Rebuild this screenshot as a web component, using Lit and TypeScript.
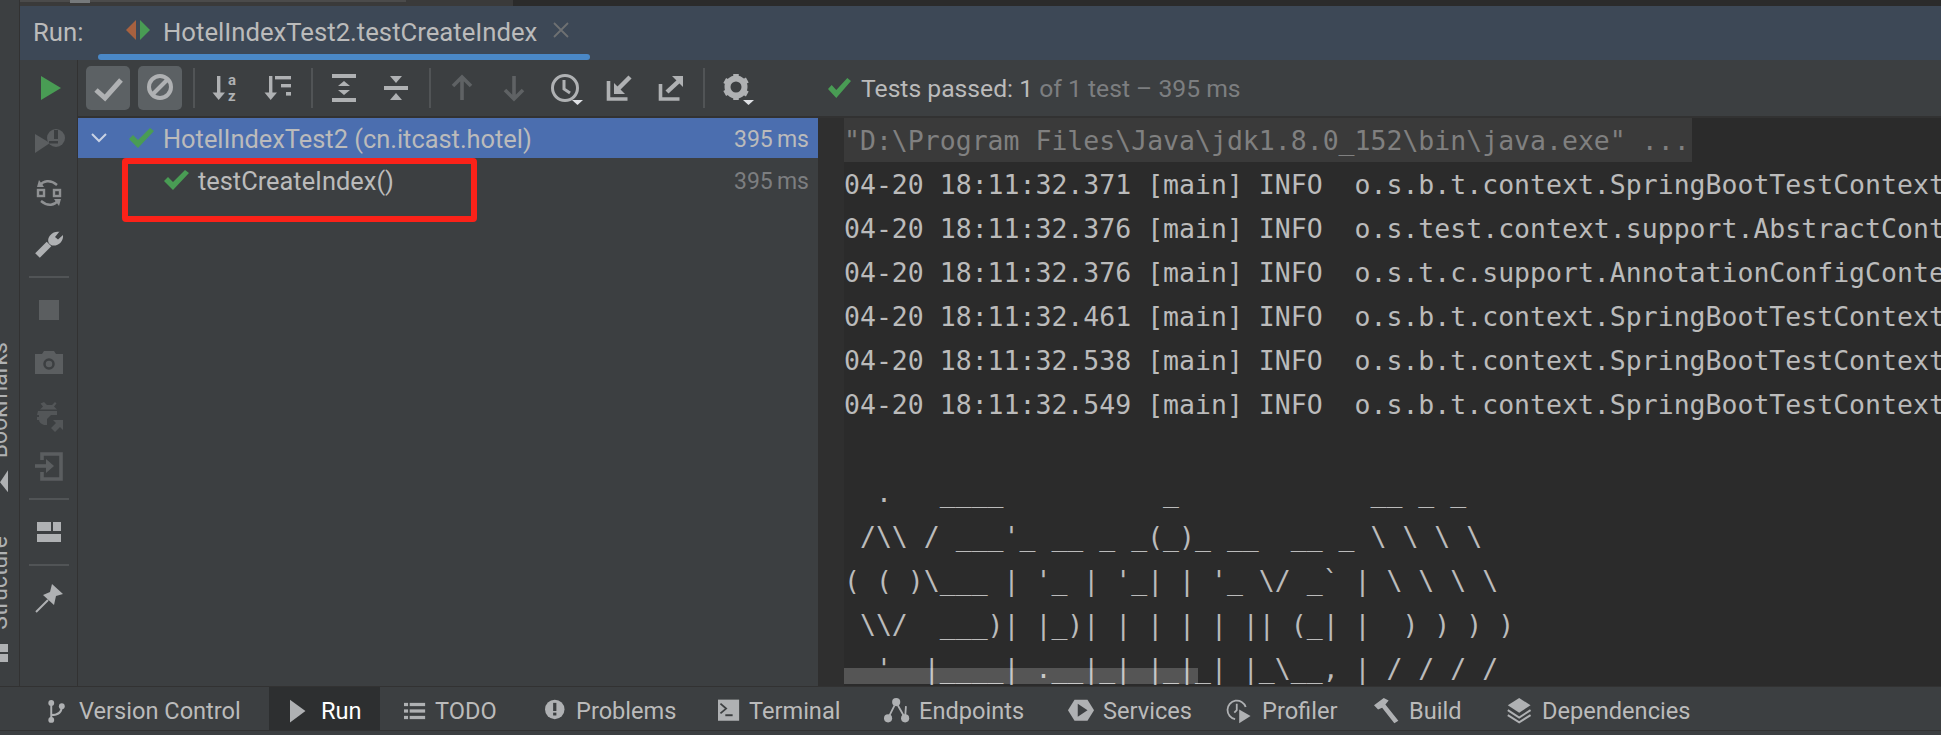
import { LitElement, html, css, svg } from "lit";
import { customElement } from "lit/decorators.js";

const ic = (body: unknown, size = 32) =>
  html`<svg class="ic" width=${size} height=${size} viewBox="0 0 32 32">${body}</svg>`;

const caret = svg`<polygon points="22,28 33,28 27.5,33" fill="#dfe1e5"/>`;

const tool = {
  az: svg`<g fill="#afb1b3"><rect x="8" y="4" width="3.4" height="20"/><polygon points="3.5,20.5 16,20.5 9.7,28"/></g>
    <text x="19" y="13" font-family="Roboto, sans-serif" font-weight="700" font-size="15" fill="#afb1b3">a</text>
    <text x="19" y="28.500" font-family="Roboto, sans-serif" font-weight="700" font-size="15" fill="#afb1b3">z</text>`,
  dur: svg`<g fill="#afb1b3"><rect x="8" y="4" width="3.4" height="20"/><polygon points="3.5,20.5 16,20.5 9.7,28"/>
    <rect x="14" y="4" width="16" height="3.4"/><rect x="20" y="12" width="10" height="3.4"/><rect x="25" y="20" width="5" height="3.6"/></g>`,
  expand: svg`<g fill="#afb1b3"><rect x="4" y="2" width="24" height="4"/><rect x="4" y="26" width="24" height="4"/>
    <polygon points="16,9 22,14 10,14"/><polygon points="10,18 22,18 16,23"/></g>`,
  collapse: svg`<g fill="#afb1b3"><polygon points="10,4 22,4 16,11"/><rect x="4" y="14" width="24" height="4"/><polygon points="16,21 22,28 10,28"/></g>`,
  up: svg`<path d="M16 28V6M7 14l9-9 9 9" fill="none" stroke="#5f6264" stroke-width="3.6"/>`,
  down: svg`<path d="M16 4v22M7 18l9 9 9-9" fill="none" stroke="#5f6264" stroke-width="3.6"/>`,
  clock: svg`<circle cx="15" cy="16" r="12.5" fill="none" stroke="#afb1b3" stroke-width="3"/><path d="M14 8v9l6 4" fill="none" stroke="#afb1b3" stroke-width="3"/>${caret}`,
  imp: svg`<path d="M7.5 9v18h19" fill="none" stroke="#afb1b3" stroke-width="3.6"/><path d="M29 5L16 18" fill="none" stroke="#afb1b3" stroke-width="4.4"/><polygon points="13,11 13,22 24,22" fill="#afb1b3"/>`,
  exp: svg`<path d="M6.5 12v15h19" fill="none" stroke="#afb1b3" stroke-width="3.6"/><path d="M13 20L26 8" fill="none" stroke="#afb1b3" stroke-width="4.4"/><polygon points="18,4 29,4 29,15" fill="#afb1b3"/>`,
  gear: svg`<circle cx="14" cy="15" r="8.5" fill="none" stroke="#afb1b3" stroke-width="6"/><path d="M14 2v5M14 23v5M2.7 8.5l4.3 2.500M21 19.500l4.300 2.500M2.700 21.500l4.300-2.500M21 10.500l4.300-2.500" stroke="#afb1b3" stroke-width="5.500"/><polygon points="21,28 32,28 26.500,33" fill="#dfe1e5"/>`,
};

const side = {
  play: svg`<polygon points="8,4 28,16 8,28" fill="#499c54"/>`,
  rerun: svg`<polygon points="2,10 2,29 17,19" fill="#5b5e60"/><circle cx="23" cy="14" r="9" fill="#5b5e60"/><rect x="21" y="6" width="4" height="9" fill="#3c3f41"/><rect x="16" y="17" width="9" height="2.500" fill="#3c3f41"/>`,
  auto: svg`<g fill="none" stroke="#8f9193" stroke-width="2.400"><rect x="5" y="14" width="6" height="6"/><rect x="21" y="14" width="6" height="6"/>
    <path d="M7 9.500C10 5 17 3 24 9M25 24.500C22 29 15 31 8 25"/></g><polygon points="6,4 11,11 4,11" fill="#8f9193"/><polygon points="26,30 21,23 28,23" fill="#8f9193"/>`,
  wrench: svg`<path d="M4.500 27.500L16 16" stroke="#afb1b3" stroke-width="6.500" fill="none"/><path d="M26.500 3.500L22 9l3 2.500 5-4.500c.8 6-4.500 11.500-11 10.500-5-2-4.500-7-2-10 3-3.500 6.500-4 9.500-3.500z" fill="#afb1b3"/>`,
  stop: svg`<rect x="6" y="6" width="20" height="20" fill="#5b5e60"/>`,
  cam: svg`<path d="M2 8h7l2-3h10l2 3h7v20H2z" fill="#5b5e60"/><circle cx="16" cy="18" r="4.500" fill="none" stroke="#3c3f41" stroke-width="2.500"/>`,
  bug: svg`<path d="M11 4l3 3h5l3-3 1.500 1.500-2.500 3 3 3H7l3-3-2.500-3zM5 13h19v4h-6l-4 4v6h-3c-3-1-5-3-5-5H4v-3h2v-2H4z" fill="#535658"/><path d="M18 30l5-5-3-3h10v10l-3-3-5 5z" fill="#535658"/>`,
  exit: svg`<path d="M9 10V4h19v25H9v-7" fill="none" stroke="#5b5e60" stroke-width="3.600"/><path d="M2 16h12" stroke="#5b5e60" stroke-width="3.600"/><polygon points="13,9 21,16 13,23" fill="#5b5e60"/>`,
  layout: svg`<g fill="#afb1b3"><rect x="4" y="6" width="14" height="9"/><rect x="20" y="6" width="8" height="9"/><rect x="4" y="18" width="24" height="8"/></g>`,
  pin: svg`<polygon points="19,2 30,12 23,14 21,23 10,13 17,10" fill="#afb1b3"/><path d="M15 18L3 30" stroke="#afb1b3" stroke-width="2"/>`,
};

const dock = {
  vc: svg`<g fill="#afb1b3"><circle cx="4" cy="6" r="3.600"/><circle cx="4" cy="27" r="3.600"/><circle cx="17" cy="10" r="3.600"/></g><path d="M4 6v21M4 21c7 0 13-3 13-11" fill="none" stroke="#afb1b3" stroke-width="2.400"/>`,
  run: svg`<polygon points="0,2 19,16 0,30" fill="#afb1b3"/>`,
  todo: svg`<g fill="#afb1b3"><rect x="0" y="6" width="5" height="4"/><rect x="7" y="6" width="19" height="4"/><rect x="0" y="14" width="5" height="4"/><rect x="7" y="14" width="19" height="4"/><rect x="0" y="22" width="5" height="4"/><rect x="7" y="22" width="19" height="4"/></g>`,
  prob: svg`<circle cx="12" cy="14" r="12" fill="#afb1b3"/><rect x="10" y="6" width="4" height="10" fill="#3c3f41"/><rect x="10" y="18" width="4" height="3.500" fill="#3c3f41"/>`,
  term: svg`<rect x="0" y="2" width="26" height="26" fill="#afb1b3"/><path d="M3 7l7 6-7 6" fill="none" stroke="#3c3f41" stroke-width="2.200"/><rect x="9" y="20" width="9" height="2.400" fill="#3c3f41"/>`,
  end: svg`<g fill="#afb1b3"><circle cx="15" cy="5" r="5"/><circle cx="5" cy="25" r="5"/><circle cx="26" cy="25" r="5"/></g><path d="M13 9L6 23M17 9l8 14M27 10l-1 14" fill="none" stroke="#afb1b3" stroke-width="2.200"/>`,
  svc: svg`<polygon points="8,2 24,2 32,15 24,28 8,28 0,15" fill="#afb1b3"/><polygon points="12,7 24,15 12,23" fill="#3c3f41"/>`,
  prof: svg`<path d="M10 26A11.500 11.500 0 1 1 23 11" fill="none" stroke="#afb1b3" stroke-width="2.200"/><path d="M12 7v8l-3 3" fill="none" stroke="#afb1b3" stroke-width="2.200"/><polygon points="15,14 29,22 15,31" fill="#afb1b3"/>`,
  build: svg`<polygon points="0,9 12,0 18,3 14,8 30,28 25,31 10,12 5,14" fill="#afb1b3"/>`,
  deps: svg`<polygon points="15,0 29,9 15,18 1,9" fill="#afb1b3"/><path d="M1 15l14 9 14-9M1 21l14 9 14-9" fill="none" stroke="#afb1b3" stroke-width="2.400"/>`,
};

const check = (w = 25) =>
  html`<svg class="ic" width=${w} height="21" viewBox="0 0 25 21" preserveAspectRatio="none"><polygon points="0,11 4,7 9,12 21,0 25,3 9,20" fill="#499c54"/></svg>`;

const LOG = [
  "04-20 18:11:32.371 [main] INFO  o.s.b.t.context.SpringBootTestContextBootstrapper",
  "04-20 18:11:32.376 [main] INFO  o.s.test.context.support.AbstractContextLoader",
  "04-20 18:11:32.376 [main] INFO  o.s.t.c.support.AnnotationConfigContextLoaderUtils",
  "04-20 18:11:32.461 [main] INFO  o.s.b.t.context.SpringBootTestContextBootstrapper",
  "04-20 18:11:32.538 [main] INFO  o.s.b.t.context.SpringBootTestContextBootstrapper",
  "04-20 18:11:32.549 [main] INFO  o.s.b.t.context.SpringBootTestContextBootstrapper",
  "",
  "  .   ____          _            __ _ _",
  " /\\\\ / ___'_ __ _ _(_)_ __  __ _ \\ \\ \\ \\",
  "( ( )\\___ | '_ | '_| | '_ \\/ _` | \\ \\ \\ \\",
  " \\\\/  ___)| |_)| | | | | || (_| |  ) ) ) )",
  "  '  |____| .__|_| |_|_| |_\\__, | / / / /",
];

@customElement("app-root")
export class AppRoot extends LitElement {
  static styles = css`
    :host { display: block; width: 1941px; height: 735px; overflow: hidden; background: #3c3f41; font-family: Roboto, "Noto Sans", sans-serif; color: #bbbbbb; }
    .ic { display: block; flex: none; overflow: visible; }
    .upper { display: flex; height: 687px; border-bottom: 1px solid #323232; box-sizing: border-box; }
    .stripe { width: 19px; flex: none; border-right: 1px solid #323232; overflow: hidden; display: flex; flex-direction: column; padding-top: 342px; box-sizing: content-box; }
    .vlabel { writing-mode: vertical-rl; transform: rotate(180deg); font-size: 23px; line-height: 30px; width: 30px; margin-left: -15px; white-space: nowrap; color: #afb1b3; }
    .bm { width: 8px; height: 22px; margin-top: 12px; flex: none; background: #afb1b3; clip-path: polygon(100% 0, 100% 100%, 0 55%); }
    .lab2 { margin-top: 44px; }
    .st { width: 8px; height: 18px; margin-top: 14px; flex: none; background: linear-gradient(#afb1b3 0 8px, transparent 8px 10px, #afb1b3 10px); }
    .pane { flex: 1; min-width: 0; display: flex; flex-direction: column; }
    .top { height: 6px; flex: none; background: #2b2b2b; display: flex; }
    .top .scroll { width: 386px; background: linear-gradient(#4b4b4b 0 2px, #3a3a3a 2px); padding-left: 50px; box-sizing: border-box; }
    .top .thumb { width: 20px; height: 3px; background: #76797b; }
    .top .mid { width: 107px; background: #3a3a3a; }
    .header { height: 48px; flex: none; background: #3d4856; display: flex; align-items: center; font-size: 25.7px; padding-left: 13px; box-sizing: border-box; }
    .header span { padding-top: 3px; }
    .runlab { width: 93px; flex: none; }
    .tabico { margin-right: 13px; display: block; flex: none; }
    .tabtxt { width: 390px; flex: none; }
    .underline { height: 6px; flex: none; background: #3d4856; }
    .underline div { margin-left: 78px; width: 492px; height: 6px; background: #4a88c7; border-radius: 3px; }
    .body { flex: 1; min-height: 0; display: flex; }
    .left { width: 57px; flex: none; border-right: 1px solid #323232; display: flex; flex-direction: column; align-items: center; padding-top: 2px; }
    .slot { height: 52px; display: flex; align-items: center; justify-content: center; flex: none; }
    .lsep { width: 40px; height: 2px; margin: 6px 0; background: #515456; flex: none; }
    .right { flex: 1; min-width: 0; display: flex; flex-direction: column; }
    .toolbar { height: 56px; flex: none; border-bottom: 2px solid #323232; display: flex; align-items: center; padding-left: 8px; }
    .tb { width: 44px; height: 44px; display: flex; align-items: center; justify-content: center; flex: none; }
    .tb.on { background: #5c6164; border-radius: 5px; margin-right: 8px; }
    .t { width: 32px; height: 32px; flex: none; margin-right: 20px; }
    .t.clock { margin-right: 19px; }
    .t.imp { margin-right: 21px; }
    .t.exp { margin-right: 17px; }
    .t.gear { margin-right: 0; }
    .sep { width: 2px; height: 40px; background: #515456; flex: none; }
    .sep.a { margin: 0 14px 0 3px; }
    .sep.b { margin: 0 15px 0 -2px; }
    .sep.c { margin: 0 15px 0 -3px; }
    .sep.d { margin: 0 17px 0 0; }
    .status { display: flex; align-items: center; font-size: 24.7px; margin-left: 74px; gap: 10px; white-space: pre; }
    .dim { color: #7c7e80; }
    .split { flex: 1; min-height: 0; display: flex; }
    .tree { width: 740px; flex: none; position: relative; }
    .row { height: 40px; display: flex; align-items: center; font-size: 25.4px; }
    .row.sel { background: #4b6eaf; padding-left: 13px; }
    .row.sub { height: 44px; padding-left: 86px; }
    .row .name { flex: 1; margin-left: 9px; padding-top: 2px; }
    .row .ms { margin-right: 9px; font-size: 23px; word-spacing: -1.500px; padding-top: 2px; }
    .chev { margin-right: 22px; }
    .red { position: absolute; left: 44px; top: 40px; width: 355px; height: 64px; border: 6px solid #fb2219; border-radius: 4px; box-sizing: border-box; }
    .gutter { width: 26px; flex: none; background: #2f2f2f; }
    .console { flex: 1; min-width: 0; background: #2b2b2b; position: relative; overflow: hidden; font-family: "DejaVu Sans Mono", monospace; font-size: 26.5px; line-height: 44px; }
    .cmd { width: 848px; height: 44px; box-sizing: border-box; padding-top: 1px; background: #3a3a3a; color: #808080; white-space: pre; }
    .hbar { position: absolute; left: 0; top: 550px; width: 354px; height: 16px; background: rgba(255, 255, 255, 0.2); }
    .log { height: 44px; box-sizing: border-box; padding-top: 1px; white-space: pre; }
    .dockbar { height: 43px; border-bottom: 1px solid #323232; display: grid; grid-template-columns: 242px 114px 141px 173px 166px 184px 159px 147px 133px 1fr; padding-left: 27px; font-size: 23.6px; box-sizing: content-box; }
    .tab { display: flex; align-items: center; gap: 5px; padding: 5px 0 0 21px; white-space: nowrap; }
    .tab.wide { gap: 9px; }
    .tab.active { background: #2d2f30; color: #ffffff; margin-right: 3px; }
  `;

  render() {
    const tabs = [
      [dock.vc, "Version Control", ""], [dock.run, "Run", "active"], [dock.todo, "TODO", ""], [dock.prob, "Problems", ""],
      [dock.term, "Terminal", ""], [dock.end, "Endpoints", "wide"], [dock.svc, "Services", "wide"], [dock.prof, "Profiler", "wide"],
      [dock.build, "Build", "wide"], [dock.deps, "Dependencies", "wide"],
    ] as const;
    return html`
      <div class="upper">
        <div class="stripe">
          <div class="vlabel">Bookmarks</div><div class="bm"></div>
          <div class="vlabel lab2">Structure</div><div class="st"></div>
        </div>
        <div class="pane">
          <div class="top"><div class="scroll"><div class="thumb"></div></div><div class="mid"></div></div>
          <div class="header">
            <span class="runlab">Run:</span>
            <svg class="tabico" width="24" height="20" viewBox="0 0 24 20"><polygon points="10,0 10,20 0,10" fill="#a8613f"/><polygon points="14,0 14,20 24,10" fill="#499c54"/></svg>
            <span class="tabtxt">HotelIndexTest2.testCreateIndex</span>
            <svg width="16" height="16" viewBox="0 0 16 16"><path d="M1 1l14 14M15 1L1 15" stroke="#6e7072" stroke-width="1.800"/></svg>
          </div>
          <div class="underline"><div></div></div>
          <div class="body">
            <div class="left">
              <div class="slot">${ic(side.play)}</div>
              <div class="slot">${ic(side.rerun)}</div>
              <div class="slot">${ic(side.auto)}</div>
              <div class="slot">${ic(side.wrench)}</div>
              <div class="lsep"></div>
              <div class="slot">${ic(side.stop)}</div>
              <div class="slot">${ic(side.cam)}</div>
              <div class="slot">${ic(side.bug)}</div>
              <div class="slot">${ic(side.exit)}</div>
              <div class="lsep"></div>
              <div class="slot">${ic(side.layout)}</div>
              <div class="lsep"></div>
              <div class="slot">${ic(side.pin)}</div>
            </div>
            <div class="right">
              <div class="toolbar">
                <div class="tb on"><svg width="44" height="44" viewBox="0 0 44 44"><path d="M10 24l9 8 16-18" fill="none" stroke="#afb1b3" stroke-width="5"/></svg></div>
                <div class="tb on"><svg width="44" height="44" viewBox="0 0 44 44"><circle cx="22" cy="21" r="11" fill="none" stroke="#afb1b3" stroke-width="4"/><path d="M14 29L30 13" stroke="#afb1b3" stroke-width="4"/></svg></div>
                <div class="sep a"></div>
                <div class="t">${ic(tool.az)}</div>
                <div class="t">${ic(tool.dur)}</div>
                <div class="sep b"></div>
                <div class="t">${ic(tool.expand)}</div>
                <div class="t">${ic(tool.collapse)}</div>
                <div class="sep c"></div>
                <div class="t">${ic(tool.up)}</div>
                <div class="t">${ic(tool.down)}</div>
                <div class="t clock">${ic(tool.clock)}</div>
                <div class="t imp">${ic(tool.imp)}</div>
                <div class="t exp">${ic(tool.exp)}</div>
                <div class="sep d"></div>
                <div class="t gear">${ic(tool.gear)}</div>
                <div class="status">${check(23)}<span>Tests passed: 1<span class="dim"> of 1 test – 395 ms</span></span></div>
              </div>
              <div class="split">
                <div class="tree">
                  <div class="row sel">
                    <svg class="chev" width="16" height="10" viewBox="0 0 16 10"><path d="M1 1l7 7 7-7" fill="none" stroke="#c9d2e4" stroke-width="2"/></svg>
                    ${check()}<span class="name">HotelIndexTest2 (cn.itcast.hotel)</span><span class="ms">395 ms</span>
                  </div>
                  <div class="row sub">
                    ${check()}<span class="name">testCreateIndex()</span><span class="ms dim">395 ms</span>
                  </div>
                  <div class="red"></div>
                </div>
                <div class="gutter"></div>
                <div class="console">
                  <div class="cmd">"D:\\Program Files\\Java\\jdk1.8.0_152\\bin\\java.exe" ...</div>
                  ${LOG.map((l) => html`<div class="log">${l}</div>`)}
                  <div class="hbar"></div>
                </div>
              </div>
            </div>
          </div>
        </div>
      </div>
      <div class="dockbar">
        ${tabs.map(([icon, label, cls]) => html`<div class="tab ${cls}"><svg class="ic" width="26" height="26" viewBox="0 0 32 32">${icon}</svg><span>${label}</span></div>`)}
      </div>
    `;
  }
}
